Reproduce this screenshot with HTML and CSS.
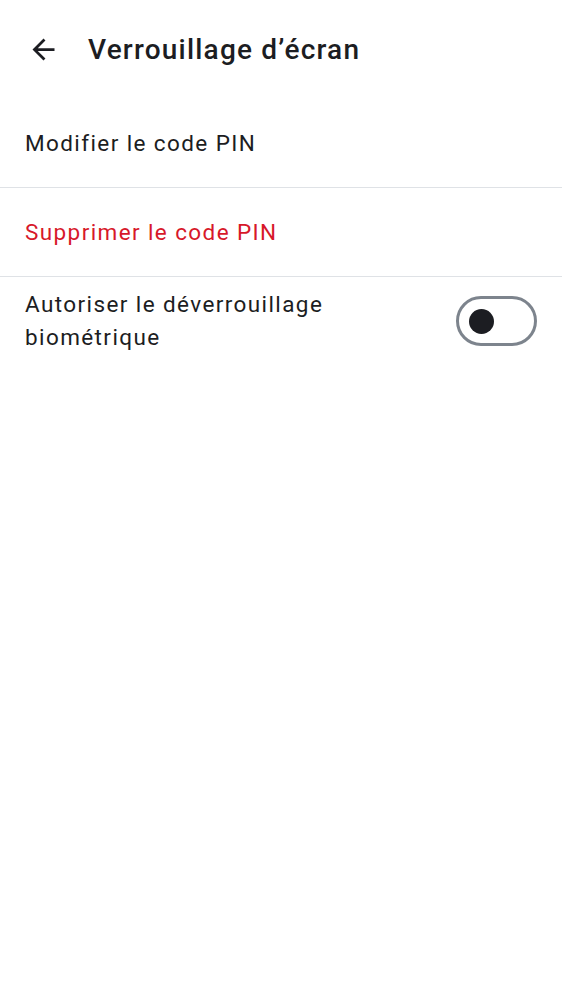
FILE: index.html
```html
<!DOCTYPE html>
<html lang="fr">
<head>
<meta charset="utf-8">
<title>Verrouillage d’écran</title>
<link rel="stylesheet" href="styles.css">
</head>
<body>
<div class="screen">
  <header class="topbar">
    <button class="back" aria-label="Retour">
      <svg viewBox="0 0 24 24" width="33" height="33"><path d="M20 11H7.83l5.59-5.59L12 4l-8 8 8 8 1.41-1.41L7.83 13H20v-2z" fill="#1c1d22"/></svg>
    </button>
    <h1 class="title">Verrouillage d’écran</h1>
  </header>
  <ul class="list">
    <li class="row">Modifier le code PIN</li>
    <li class="row danger">Supprimer le code PIN</li>
    <li class="row last">
      <span class="label">Autoriser le déverrouillage biométrique</span>
      <span class="switch"><span class="knob"></span></span>
    </li>
  </ul>
</div>
</body>
</html>
```
FILE: styles.css
```css
html, body {
  margin: 0;
  padding: 0;
  background: #ffffff;
}
body {
  font-family: Roboto, "Noto Sans", sans-serif;
  color: #1c1d22;
}
.screen {
  width: 562px;
}
.topbar {
  height: 99px;
  display: flex;
  align-items: center;
  padding-left: 27px;
  box-sizing: border-box;
}
.back {
  border: 0;
  background: none;
  padding: 0;
  margin: 0;
  width: 33px;
  height: 33px;
  display: flex;
}
.back svg {
  display: block;
}
.title {
  margin: 0 0 0 28px;
  font-size: 28px;
  font-weight: 500;
  letter-spacing: 1.2px;
  line-height: 1;
  color: #1c1d22;
}
.list {
  list-style: none;
  margin: 0;
  padding: 0;
}
.row {
  min-height: 88px;
  box-sizing: content-box;
  display: flex;
  align-items: center;
  padding: 0 25px 0 25px;
  font-size: 22.5px;
  letter-spacing: 1.4px;
  line-height: 33px;
  border-bottom: 1px solid #dfe2e6;
}
.row.danger {
  color: #d7182a;
}
.row.last {
  border-bottom: 0;
  justify-content: space-between;
}
.label {
  max-width: 330px;
}
.switch {
  width: 81px;
  height: 50px;
  box-sizing: border-box;
  border: 3px solid #7d848d;
  border-radius: 25px;
  display: flex;
  align-items: center;
  padding-left: 10px;
}
.knob {
  width: 25px;
  height: 25px;
  border-radius: 50%;
  background: #1c1d22;
}
```
